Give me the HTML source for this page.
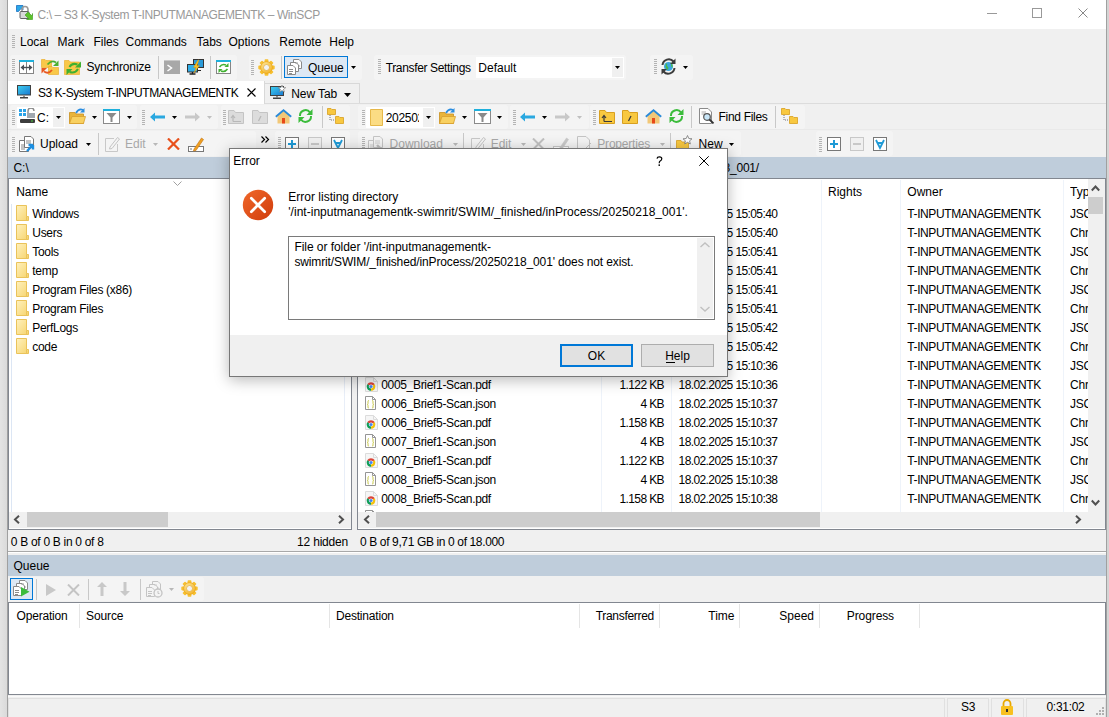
<!DOCTYPE html><html><head><meta charset="utf-8"><style>
*{margin:0;padding:0;box-sizing:border-box}
html,body{width:1109px;height:717px;overflow:hidden;background:#f0f0f0;position:relative;
font-family:"Liberation Sans",sans-serif;font-size:12px;color:#000}
div,span,svg{position:absolute;display:block}
span{white-space:pre}
</style></head><body><div style="left:0px;top:0px;width:7px;height:717px;background:linear-gradient(to right,#e4e4e4,#dadada)"></div>
<div style="left:7px;top:0px;width:1px;height:717px;background:#a0a0a0"></div>
<div style="left:1107px;top:0px;width:2px;height:717px;background:#d4d4d4"></div>
<div style="left:1106px;top:0px;width:1px;height:717px;background:#a0a0a0"></div>
<div style="left:8px;top:0px;width:1098px;height:29px;background:#fff"></div>
<svg style="left:16px;top:5px;" width="17" height="17" viewBox="0 0 17 17"><path d="M0.5 0.5H7V5L5 3.5L2.5 6.5L0.5 6.5Z" fill="#2aa7e8" stroke="#1a6fc0" stroke-width="0.8"/><path d="M6 6V4.5A3 3 0 0 1 12 4.5V6" fill="none" stroke="#9a9a9a" stroke-width="1.6"/><rect x="4" y="6.5" width="9" height="7" rx="1" fill="#d8d8d8" stroke="#555" stroke-width="0.9"/><path d="M9 10L13 14L10.5 14.5H16.5V8.5L16 11L12 7Z" fill="#5cc22a" stroke="#3a9a1a" stroke-width="0.6"/></svg>
<span style="top:7.74px;font-size:12px;line-height:15.0px;color:#999;letter-spacing:-0.42px;left:37.5px;">C:\ – S3 K-System T-INPUTMANAGEMENTK – WinSCP</span>
<div style="left:987px;top:13px;width:10px;height:1px;background:#999"></div>
<div style="left:1032px;top:8px;width:10px;height:10px;border:1px solid #999"></div>
<svg style="left:1078px;top:8px;" width="10" height="10" viewBox="0 0 10 10"><path d="M0.5 0.5L9.5 9.5M9.5 0.5L0.5 9.5" stroke="#888" stroke-width="1"/></svg>
<div style="left:10px;top:55px;width:227px;height:25px;background:#f4f4f4;border-radius:3px"></div>
<div style="left:249px;top:55px;width:113px;height:25px;background:#f4f4f4;border-radius:3px"></div>
<div style="left:374px;top:55px;width:252px;height:25px;background:#f4f4f4;border-radius:3px"></div>
<div style="left:650px;top:55px;width:43px;height:25px;background:#f4f4f4;border-radius:3px"></div>
<div style="left:10px;top:105px;width:127px;height:24px;background:#f4f4f4;border-radius:3px"></div>
<div style="left:140px;top:105px;width:78px;height:24px;background:#f4f4f4;border-radius:3px"></div>
<div style="left:221px;top:105px;width:129px;height:24px;background:#f4f4f4;border-radius:3px"></div>
<div style="left:358px;top:105px;width:150px;height:24px;background:#f4f4f4;border-radius:3px"></div>
<div style="left:510px;top:105px;width:79px;height:24px;background:#f4f4f4;border-radius:3px"></div>
<div style="left:590px;top:105px;width:215px;height:24px;background:#f4f4f4;border-radius:3px"></div>
<div style="left:10px;top:131px;width:246px;height:25px;background:#f4f4f4;border-radius:3px"></div>
<div style="left:275px;top:131px;width:75px;height:25px;background:#f4f4f4;border-radius:3px"></div>
<div style="left:358px;top:131px;width:383px;height:25px;background:#f4f4f4;border-radius:3px"></div>
<div style="left:816px;top:131px;width:77px;height:25px;background:#f4f4f4;border-radius:3px"></div>
<div style="left:8px;top:577px;width:196px;height:24px;background:#f4f4f4;border-radius:3px"></div>
<svg style="left:12px;top:35px;" width="3" height="14" viewBox="0 0 3 14"><rect x="0" y="0" width="3" height="1" fill="#b4b4b4"/><rect x="0" y="2" width="3" height="1" fill="#b4b4b4"/><rect x="0" y="4" width="3" height="1" fill="#b4b4b4"/><rect x="0" y="6" width="3" height="1" fill="#b4b4b4"/><rect x="0" y="8" width="3" height="1" fill="#b4b4b4"/><rect x="0" y="10" width="3" height="1" fill="#b4b4b4"/><rect x="0" y="12" width="3" height="1" fill="#b4b4b4"/></svg>
<span style="top:35.34px;font-size:12px;line-height:15.0px;color:#000;left:20px;">Local</span>
<span style="top:35.34px;font-size:12px;line-height:15.0px;color:#000;left:57.6px;">Mark</span>
<span style="top:35.34px;font-size:12px;line-height:15.0px;color:#000;left:93.4px;">Files</span>
<span style="top:35.34px;font-size:12px;line-height:15.0px;color:#000;left:125.5px;">Commands</span>
<span style="top:35.34px;font-size:12px;line-height:15.0px;color:#000;left:196.5px;">Tabs</span>
<span style="top:35.34px;font-size:12px;line-height:15.0px;color:#000;left:228.5px;">Options</span>
<span style="top:35.34px;font-size:12px;line-height:15.0px;color:#000;left:279.3px;">Remote</span>
<span style="top:35.34px;font-size:12px;line-height:15.0px;color:#000;left:329.3px;">Help</span>
<svg style="left:12px;top:59px;" width="3" height="16" viewBox="0 0 3 16"><rect x="0" y="0" width="3" height="1" fill="#b4b4b4"/><rect x="0" y="2" width="3" height="1" fill="#b4b4b4"/><rect x="0" y="4" width="3" height="1" fill="#b4b4b4"/><rect x="0" y="6" width="3" height="1" fill="#b4b4b4"/><rect x="0" y="8" width="3" height="1" fill="#b4b4b4"/><rect x="0" y="10" width="3" height="1" fill="#b4b4b4"/><rect x="0" y="12" width="3" height="1" fill="#b4b4b4"/><rect x="0" y="14" width="3" height="1" fill="#b4b4b4"/></svg>
<svg style="left:19px;top:60px;" width="15" height="14" viewBox="0 0 15 14"><rect x="0.5" y="1.5" width="14" height="12" fill="#fff" stroke="#858585"/><rect x="0" y="0" width="15" height="2" fill="#1eb0dc"/><path d="M7.5 2V14" stroke="#858585"/><path d="M3 7.5H12" stroke="#4a4f55" stroke-width="1.4"/><path d="M1.5 7.5L5 4.5V10.5Z M13.5 7.5L10 4.5V10.5Z" fill="#4a4f55"/></svg>
<svg style="left:41px;top:59px;" width="18" height="16" viewBox="0 0 18 16"><path d="M0.5 0.5H4L5 1.5H10.5V8.5H0.5Z" fill="#f9c848" stroke="#eaa820" stroke-width="0.6"/><path d="M7.5 7.5H11L12 8.5H17.5V15.5H7.5Z" fill="#f9c848" stroke="#eaa820" stroke-width="0.6"/><path d="M6.5 5.5Q10.5 0.5 15 3.5" stroke="#4cb030" stroke-width="1.8" fill="none"/><path d="M17.5 1.5V7H12Z" fill="#4cb030"/><path d="M11 11Q7.5 15.5 3 12.5" stroke="#e85820" stroke-width="1.8" fill="none"/><path d="M0.5 14.5V9H6Z" fill="#e85820"/></svg>
<svg style="left:64px;top:59px;" width="18" height="16" viewBox="0 0 18 16"><path d="M0.5 1.5H5L6.5 3H15.5V15.5H0.5Z" fill="#f9c848" stroke="#eaa820" stroke-width="0.6"/><path d="M5.5 8Q8 3.5 13.5 5.5" stroke="#40b030" stroke-width="2" fill="none"/><path d="M17 2.5V8.5H11Z" fill="#40b030"/><path d="M14 10Q11 15 5.5 13" stroke="#40b030" stroke-width="2" fill="none"/><path d="M2.5 16V10H8.5Z" fill="#40b030"/></svg>
<span style="top:60.34px;font-size:12px;line-height:15.0px;color:#000;letter-spacing:-0.15px;left:86.4px;">Synchronize</span>
<div style="left:158px;top:56px;width:1px;height:23px;background:#c8c8c8"></div>
<svg style="left:164px;top:60px;" width="16" height="14" viewBox="0 0 16 14"><rect x="0" y="0" width="16" height="14" fill="#a8a8a8"/><rect x="0" y="0" width="16" height="1" fill="#c8c8c8"/><path d="M3.5 5L7.5 8L3.5 11" stroke="#fff" fill="none" stroke-width="1.5"/></svg>
<svg style="left:187px;top:59px;" width="17" height="16" viewBox="0 0 17 16"><rect x="6.5" y="0.5" width="10" height="8" fill="#2a9ad8" stroke="#333" stroke-width="1"/><path d="M10 9V11M8 11.5H14" stroke="#222" stroke-width="1.2"/><rect x="0.5" y="5.5" width="10" height="7.5" fill="#30aee8" stroke="#333" stroke-width="1"/><path d="M5.5 13V14.5M2.5 15H8.5" stroke="#222" stroke-width="1.4"/><path d="M11 1L6.5 8.5H9L7 14L12.5 6.5H10L12 1Z" fill="#f8c020" stroke="#d89000" stroke-width="0.4"/></svg>
<div style="left:210px;top:56px;width:1px;height:23px;background:#c8c8c8"></div>
<svg style="left:216px;top:60px;" width="15" height="14" viewBox="0 0 15 14"><rect x="0.5" y="1.5" width="14" height="12" fill="#fff" stroke="#858585"/><rect x="0" y="0" width="15" height="2" fill="#1eb0dc"/><path d="M3.5 7Q6 3.5 10 5" stroke="#40b030" stroke-width="1.5" fill="none"/><path d="M12.5 3V7H8.5Z" fill="#40b030"/><path d="M11.5 9Q9 12.5 5 11" stroke="#40b030" stroke-width="1.5" fill="none"/><path d="M2.5 13V9H6.5Z" fill="#40b030"/></svg>
<svg style="left:251px;top:60px;" width="3" height="16" viewBox="0 0 3 16"><rect x="0" y="0" width="3" height="1" fill="#b4b4b4"/><rect x="0" y="2" width="3" height="1" fill="#b4b4b4"/><rect x="0" y="4" width="3" height="1" fill="#b4b4b4"/><rect x="0" y="6" width="3" height="1" fill="#b4b4b4"/><rect x="0" y="8" width="3" height="1" fill="#b4b4b4"/><rect x="0" y="10" width="3" height="1" fill="#b4b4b4"/><rect x="0" y="12" width="3" height="1" fill="#b4b4b4"/><rect x="0" y="14" width="3" height="1" fill="#b4b4b4"/></svg>
<svg style="left:258px;top:59px;" width="17" height="17" viewBox="0 0 17 17"><defs><radialGradient id="gg" cx="0.4" cy="0.35" r="0.7"><stop offset="0" stop-color="#fde9a0"/><stop offset="1" stop-color="#f2b020"/></radialGradient></defs><rect x="6.6" y="0.3" width="3.8" height="4" rx="0.8" fill="#f7c030" transform="rotate(0 8.5 8.5)"/><rect x="6.6" y="0.3" width="3.8" height="4" rx="0.8" fill="#f7c030" transform="rotate(45 8.5 8.5)"/><rect x="6.6" y="0.3" width="3.8" height="4" rx="0.8" fill="#f7c030" transform="rotate(90 8.5 8.5)"/><rect x="6.6" y="0.3" width="3.8" height="4" rx="0.8" fill="#f7c030" transform="rotate(135 8.5 8.5)"/><rect x="6.6" y="0.3" width="3.8" height="4" rx="0.8" fill="#f7c030" transform="rotate(180 8.5 8.5)"/><rect x="6.6" y="0.3" width="3.8" height="4" rx="0.8" fill="#f7c030" transform="rotate(225 8.5 8.5)"/><rect x="6.6" y="0.3" width="3.8" height="4" rx="0.8" fill="#f7c030" transform="rotate(270 8.5 8.5)"/><rect x="6.6" y="0.3" width="3.8" height="4" rx="0.8" fill="#f7c030" transform="rotate(315 8.5 8.5)"/><circle cx="8.5" cy="8.5" r="6" fill="url(#gg)" stroke="#eaa418" stroke-width="0.6"/><circle cx="8.5" cy="8.5" r="3" fill="#f2f2f2" stroke="#e0a020" stroke-width="0.6"/></svg>
<div style="left:281px;top:56px;width:1px;height:23px;background:#c8c8c8"></div>
<div style="left:284px;top:56px;width:64px;height:22px;background:#dde8f4;border:1px solid #0078d7"></div>
<svg style="left:287px;top:59px;" width="16" height="16" viewBox="0 0 16 16"><path d="M6.5 0.5H12L14.5 3V9.5H6.5Z" fill="#fff" stroke="#8a8a8a"/><path d="M3.5 3.5H9L11.5 6V12.5H3.5Z" fill="#fff" stroke="#8a8a8a"/><path d="M0.5 6.5H6L8.5 9V15.5H0.5Z" fill="#fff" stroke="#8a8a8a"/><path d="M2 10.5H6M2 12.5H6M2 14.5H5" stroke="#8a8a8a"/><path d="M8 4H11M11 7H13" stroke="#8a8a8a" stroke-width="0.8"/></svg>
<span style="top:60.84px;font-size:12px;line-height:15.0px;color:#000;letter-spacing:-0.1px;left:308px;">Queue</span>
<svg style="left:351px;top:66px;" width="5" height="3" viewBox="0 0 5 3"><path d="M0 0H5L2.5 3Z" fill="#000"/></svg>
<svg style="left:378px;top:59px;" width="3" height="16" viewBox="0 0 3 16"><rect x="0" y="0" width="3" height="1" fill="#b4b4b4"/><rect x="0" y="2" width="3" height="1" fill="#b4b4b4"/><rect x="0" y="4" width="3" height="1" fill="#b4b4b4"/><rect x="0" y="6" width="3" height="1" fill="#b4b4b4"/><rect x="0" y="8" width="3" height="1" fill="#b4b4b4"/><rect x="0" y="10" width="3" height="1" fill="#b4b4b4"/><rect x="0" y="12" width="3" height="1" fill="#b4b4b4"/><rect x="0" y="14" width="3" height="1" fill="#b4b4b4"/></svg>
<span style="top:61.34px;font-size:12px;line-height:15.0px;color:#000;letter-spacing:-0.35px;left:385.7px;">Transfer Settings</span>
<div style="left:476px;top:57px;width:148px;height:21px;background:#fff"></div>
<div style="left:612px;top:58px;width:11px;height:19px;background:#f0f0f0"></div>
<svg style="left:615px;top:66px;" width="5" height="3" viewBox="0 0 5 3"><path d="M0 0H5L2.5 3Z" fill="#000"/></svg>
<span style="top:61.34px;font-size:12px;line-height:15.0px;color:#000;left:478.3px;">Default</span>
<svg style="left:654px;top:59px;" width="3" height="16" viewBox="0 0 3 16"><rect x="0" y="0" width="3" height="1" fill="#b4b4b4"/><rect x="0" y="2" width="3" height="1" fill="#b4b4b4"/><rect x="0" y="4" width="3" height="1" fill="#b4b4b4"/><rect x="0" y="6" width="3" height="1" fill="#b4b4b4"/><rect x="0" y="8" width="3" height="1" fill="#b4b4b4"/><rect x="0" y="10" width="3" height="1" fill="#b4b4b4"/><rect x="0" y="12" width="3" height="1" fill="#b4b4b4"/><rect x="0" y="14" width="3" height="1" fill="#b4b4b4"/></svg>
<svg style="left:660px;top:58px;" width="17" height="17" viewBox="0 0 17 17"><circle cx="8.5" cy="8.5" r="4.5" fill="#3aa6e0"/><path d="M6 5Q8 6 7 8Q9 9 8 12Q6 11 5.5 9Z M10 4.5Q12 6 11 8L12.5 10Q13 7 12 5Z" fill="#4cb848"/><path d="M2.5 7A6.3 6.3 0 0 1 13.5 3.5M14.5 10A6.3 6.3 0 0 1 3.5 13.5" fill="none" stroke="#3c3c3c" stroke-width="2"/><path d="M15.5 0.5V6H10Z M1.5 16.5V11H7Z" fill="#3c3c3c"/></svg>
<svg style="left:683px;top:66px;" width="5" height="3" viewBox="0 0 5 3"><path d="M0 0H5L2.5 3Z" fill="#000"/></svg>
<div style="left:8px;top:81px;width:257px;height:23px;background:#fff;border-right:1px solid #d8d8d8"></div>
<svg style="left:17px;top:85px;" width="14" height="14" viewBox="0 0 14 14"><defs><linearGradient id="mg" x1="0" y1="0" x2="1" y2="1"><stop offset="0" stop-color="#3ed0f0"/><stop offset="1" stop-color="#1a78d0"/></linearGradient></defs><rect x="0.5" y="0.5" width="13" height="9.5" fill="url(#mg)" stroke="#404040"/><rect x="6" y="10.5" width="2" height="1.5" fill="#909090"/><rect x="3" y="12" width="8" height="1.5" fill="#404040"/></svg>
<span style="top:85.54px;font-size:12px;line-height:15.0px;color:#000;letter-spacing:-0.45px;left:37.9px;">S3 K-System T-INPUTMANAGEMENTK</span>
<svg style="left:247px;top:87.5px;" width="9" height="9" viewBox="0 0 9 9"><path d="M0.5 0.5L8.5 8.5M8.5 0.5L0.5 8.5" stroke="#000" stroke-width="1.1"/></svg>
<div style="left:264px;top:83px;width:96px;height:21px;border:1px solid #d8d8d8;border-bottom:none;background:#f0f0f0"></div>
<svg style="left:270px;top:85px;" width="17" height="15" viewBox="0 0 17 15"><defs><linearGradient id="mg" x1="0" y1="0" x2="1" y2="1"><stop offset="0" stop-color="#3ed0f0"/><stop offset="1" stop-color="#1a78d0"/></linearGradient></defs><rect x="0.5" y="1.5" width="13" height="9" fill="url(#mg)" stroke="#404040"/><rect x="6" y="11" width="2" height="1.5" fill="#909090"/><rect x="3" y="12.5" width="8" height="1.5" fill="#404040"/><path d="M12 0L13 2.5L15.8 2.6L13.6 4.3L14.4 7L12 5.5L9.6 7L10.4 4.3L8.2 2.6L11 2.5Z" fill="#fff" stroke="#777" stroke-width="0.6"/></svg>
<span style="top:86.74px;font-size:12px;line-height:15.0px;color:#000;letter-spacing:-0.1px;left:291.3px;">New Tab</span>
<svg style="left:344px;top:93px;" width="7" height="4" viewBox="0 0 7 4"><path d="M0 0H7L3.5 4Z" fill="#000"/></svg>
<div style="left:265px;top:103px;width:841px;height:1px;background:#dcdcdc"></div>
<div style="left:8px;top:129px;width:1098px;height:1px;background:#e9e9e9"></div>
<svg style="left:12px;top:110px;" width="3" height="16" viewBox="0 0 3 16"><rect x="0" y="0" width="3" height="1" fill="#b4b4b4"/><rect x="0" y="2" width="3" height="1" fill="#b4b4b4"/><rect x="0" y="4" width="3" height="1" fill="#b4b4b4"/><rect x="0" y="6" width="3" height="1" fill="#b4b4b4"/><rect x="0" y="8" width="3" height="1" fill="#b4b4b4"/><rect x="0" y="10" width="3" height="1" fill="#b4b4b4"/><rect x="0" y="12" width="3" height="1" fill="#b4b4b4"/><rect x="0" y="14" width="3" height="1" fill="#b4b4b4"/></svg>
<div style="left:17px;top:107px;width:48px;height:21px;background:#fff"></div>
<div style="left:53px;top:108px;width:11px;height:19px;background:#f0f0f0"></div>
<svg style="left:19px;top:108px;" width="17" height="16" viewBox="0 0 17 16"><rect x="0" y="1" width="3" height="3" fill="#2aa3e8"/><rect x="4" y="1" width="3" height="3" fill="#2aa3e8"/><rect x="0" y="5" width="3" height="3" fill="#2aa3e8"/><rect x="4" y="5" width="3" height="3" fill="#2aa3e8"/><path d="M9 5V3A3 3 0 0 1 15 3" fill="none" stroke="#8a8a8a" stroke-width="1.4"/><rect x="8" y="5" width="8" height="5" fill="#a0a8b0"/><rect x="1" y="11" width="15" height="4" rx="1" fill="#3c3c3c"/><rect x="12" y="12.5" width="2" height="1" fill="#4cd040"/></svg>
<span style="top:111.34px;font-size:12px;line-height:15.0px;color:#000;left:37px;">C:</span>
<svg style="left:56px;top:116px;" width="5" height="3" viewBox="0 0 5 3"><path d="M0 0H5L2.5 3Z" fill="#000"/></svg>
<svg style="left:69px;top:108px;" width="17" height="16" viewBox="0 0 17 16"><path d="M0.5 4.5H6L7 6H14.5V15.5H0.5Z" fill="#e9b43a" stroke="#c89020" stroke-width="0.8"/><path d="M0.5 15.5L3 8.5H16.5L14.5 15.5Z" fill="#f8d060" stroke="#d8a030" stroke-width="0.8"/><path d="M7 5Q10 0 14 2" fill="none" stroke="#2a8de0" stroke-width="1.8"/><path d="M15.5 0V4.5H11Z" fill="#2a8de0"/></svg>
<svg style="left:92px;top:116px;" width="5" height="3" viewBox="0 0 5 3"><path d="M0 0H5L2.5 3Z" fill="#000"/></svg>
<svg style="left:103px;top:109px;" width="17" height="15" viewBox="0 0 17 15"><rect x="0.5" y="1.5" width="16" height="13" fill="#fff" stroke="#8a8a8a"/><rect x="0" y="0" width="17" height="2" fill="#1eb0dc"/><path d="M3.5 4H13.5L9.5 8.5V13H7.5V8.5Z" fill="#8a8a8a"/></svg>
<svg style="left:127px;top:116px;" width="5" height="3" viewBox="0 0 5 3"><path d="M0 0H5L2.5 3Z" fill="#000"/></svg>
<svg style="left:142px;top:110px;" width="3" height="16" viewBox="0 0 3 16"><rect x="0" y="0" width="3" height="1" fill="#b4b4b4"/><rect x="0" y="2" width="3" height="1" fill="#b4b4b4"/><rect x="0" y="4" width="3" height="1" fill="#b4b4b4"/><rect x="0" y="6" width="3" height="1" fill="#b4b4b4"/><rect x="0" y="8" width="3" height="1" fill="#b4b4b4"/><rect x="0" y="10" width="3" height="1" fill="#b4b4b4"/><rect x="0" y="12" width="3" height="1" fill="#b4b4b4"/><rect x="0" y="14" width="3" height="1" fill="#b4b4b4"/></svg>
<svg style="left:150px;top:112px;" width="15" height="10" viewBox="0 0 15 10"><path d="M0 5L5 0.5V3.5H15V6.5H5V9.5Z" fill="#2aa8e0"/></svg>
<svg style="left:172px;top:116px;" width="5" height="3" viewBox="0 0 5 3"><path d="M0 0H5L2.5 3Z" fill="#000"/></svg>
<svg style="left:185px;top:112px;" width="15" height="10" viewBox="0 0 15 10"><path d="M15 5L10 0.5V3.5H0V6.5H10V9.5Z" fill="#c8c8c8"/></svg>
<svg style="left:207px;top:116px;" width="5" height="3" viewBox="0 0 5 3"><path d="M0 0H5L2.5 3Z" fill="#c0c0c0"/></svg>
<svg style="left:223px;top:110px;" width="3" height="16" viewBox="0 0 3 16"><rect x="0" y="0" width="3" height="1" fill="#b4b4b4"/><rect x="0" y="2" width="3" height="1" fill="#b4b4b4"/><rect x="0" y="4" width="3" height="1" fill="#b4b4b4"/><rect x="0" y="6" width="3" height="1" fill="#b4b4b4"/><rect x="0" y="8" width="3" height="1" fill="#b4b4b4"/><rect x="0" y="10" width="3" height="1" fill="#b4b4b4"/><rect x="0" y="12" width="3" height="1" fill="#b4b4b4"/><rect x="0" y="14" width="3" height="1" fill="#b4b4b4"/></svg>
<svg style="left:228px;top:109px;" width="16" height="15" viewBox="0 0 16 15"><path d="M0.5 1.5H6L7.5 3.5H15.5V14.5H0.5Z" fill="#dcdcdc" stroke="#c4c4c4"/><path d="M5 12.5H13M5 12.5V7M3 9L5 6.5L7 9" fill="none" stroke="#b8b8b8" stroke-width="1.2"/></svg>
<svg style="left:252px;top:109px;" width="16" height="15" viewBox="0 0 16 15"><path d="M0.5 1.5H6L7.5 3.5H15.5V14.5H0.5Z" fill="#dcdcdc" stroke="#c4c4c4"/><path d="M9 7L6.5 12" stroke="#b8b8b8" stroke-width="1.3"/></svg>
<svg style="left:275px;top:109px;" width="17" height="15" viewBox="0 0 17 15"><path d="M8.5 1.5L2.5 7V14.5H14.5V7Z" fill="#f2c878"/><path d="M0.8 7.8L8.5 1.2L16.2 7.8" stroke="#2a8ad8" stroke-width="1.8" fill="none"/><rect x="7" y="9" width="3" height="5.5" fill="#e84818"/></svg>
<svg style="left:297px;top:108px;" width="17" height="16" viewBox="0 0 17 16"><path d="M3 8A5.5 5.5 0 0 1 13 4.5M14 8A5.5 5.5 0 0 1 4 11.5" fill="none" stroke="#3cbc3c" stroke-width="2"/><path d="M15.5 1V7H9.5Z M1.5 15V9H7.5Z" fill="#3cbc3c"/></svg>
<div style="left:322px;top:106px;width:1px;height:22px;background:#c8c8c8"></div>
<svg style="left:327px;top:108px;" width="17" height="16" viewBox="0 0 17 16"><path d="M0.5 0.5H4L5 1.5H8.5V6.5H0.5Z" fill="#f8c840" stroke="#d8a020" stroke-width="0.8"/><path d="M8.5 8.5H12L13 9.5H16.5V15.5H8.5Z" fill="#f8c840" stroke="#d8a020" stroke-width="0.8"/><path d="M3 7V12H8" fill="none" stroke="#555" stroke-width="0.8" stroke-dasharray="1 1"/></svg>
<svg style="left:362px;top:110px;" width="3" height="16" viewBox="0 0 3 16"><rect x="0" y="0" width="3" height="1" fill="#b4b4b4"/><rect x="0" y="2" width="3" height="1" fill="#b4b4b4"/><rect x="0" y="4" width="3" height="1" fill="#b4b4b4"/><rect x="0" y="6" width="3" height="1" fill="#b4b4b4"/><rect x="0" y="8" width="3" height="1" fill="#b4b4b4"/><rect x="0" y="10" width="3" height="1" fill="#b4b4b4"/><rect x="0" y="12" width="3" height="1" fill="#b4b4b4"/><rect x="0" y="14" width="3" height="1" fill="#b4b4b4"/></svg>
<div style="left:366px;top:107px;width:69px;height:21px;background:#fff"></div>
<div style="left:423px;top:108px;width:11px;height:19px;background:#f0f0f0"></div>
<svg style="left:370px;top:109px;" width="13" height="17" viewBox="0 0 13 17"><path d="M0.5 0.5H12.5V16.5H0.5Z" fill="#fbdc84" stroke="#e6b84a"/></svg>
<span style="top:111.34px;font-size:12px;line-height:15.0px;color:#000;letter-spacing:-0.3px;left:385.7px;width:33px;overflow:hidden;">202502</span>
<svg style="left:426px;top:116px;" width="5" height="3" viewBox="0 0 5 3"><path d="M0 0H5L2.5 3Z" fill="#000"/></svg>
<svg style="left:439px;top:108px;" width="17" height="16" viewBox="0 0 17 16"><path d="M0.5 4.5H6L7 6H14.5V15.5H0.5Z" fill="#e9b43a" stroke="#c89020" stroke-width="0.8"/><path d="M0.5 15.5L3 8.5H16.5L14.5 15.5Z" fill="#f8d060" stroke="#d8a030" stroke-width="0.8"/><path d="M7 5Q10 0 14 2" fill="none" stroke="#2a8de0" stroke-width="1.8"/><path d="M15.5 0V4.5H11Z" fill="#2a8de0"/></svg>
<svg style="left:462px;top:116px;" width="5" height="3" viewBox="0 0 5 3"><path d="M0 0H5L2.5 3Z" fill="#000"/></svg>
<svg style="left:474px;top:109px;" width="17" height="15" viewBox="0 0 17 15"><rect x="0.5" y="1.5" width="16" height="13" fill="#fff" stroke="#8a8a8a"/><rect x="0" y="0" width="17" height="2" fill="#1eb0dc"/><path d="M3.5 4H13.5L9.5 8.5V13H7.5V8.5Z" fill="#8a8a8a"/></svg>
<svg style="left:497px;top:116px;" width="5" height="3" viewBox="0 0 5 3"><path d="M0 0H5L2.5 3Z" fill="#000"/></svg>
<svg style="left:513px;top:110px;" width="3" height="16" viewBox="0 0 3 16"><rect x="0" y="0" width="3" height="1" fill="#b4b4b4"/><rect x="0" y="2" width="3" height="1" fill="#b4b4b4"/><rect x="0" y="4" width="3" height="1" fill="#b4b4b4"/><rect x="0" y="6" width="3" height="1" fill="#b4b4b4"/><rect x="0" y="8" width="3" height="1" fill="#b4b4b4"/><rect x="0" y="10" width="3" height="1" fill="#b4b4b4"/><rect x="0" y="12" width="3" height="1" fill="#b4b4b4"/><rect x="0" y="14" width="3" height="1" fill="#b4b4b4"/></svg>
<svg style="left:520px;top:112px;" width="15" height="10" viewBox="0 0 15 10"><path d="M0 5L5 0.5V3.5H15V6.5H5V9.5Z" fill="#2aa8e0"/></svg>
<svg style="left:542px;top:116px;" width="5" height="3" viewBox="0 0 5 3"><path d="M0 0H5L2.5 3Z" fill="#000"/></svg>
<svg style="left:555px;top:112px;" width="15" height="10" viewBox="0 0 15 10"><path d="M15 5L10 0.5V3.5H0V6.5H10V9.5Z" fill="#c8c8c8"/></svg>
<svg style="left:577px;top:116px;" width="5" height="3" viewBox="0 0 5 3"><path d="M0 0H5L2.5 3Z" fill="#c0c0c0"/></svg>
<svg style="left:593px;top:110px;" width="3" height="16" viewBox="0 0 3 16"><rect x="0" y="0" width="3" height="1" fill="#b4b4b4"/><rect x="0" y="2" width="3" height="1" fill="#b4b4b4"/><rect x="0" y="4" width="3" height="1" fill="#b4b4b4"/><rect x="0" y="6" width="3" height="1" fill="#b4b4b4"/><rect x="0" y="8" width="3" height="1" fill="#b4b4b4"/><rect x="0" y="10" width="3" height="1" fill="#b4b4b4"/><rect x="0" y="12" width="3" height="1" fill="#b4b4b4"/><rect x="0" y="14" width="3" height="1" fill="#b4b4b4"/></svg>
<svg style="left:599px;top:109px;" width="16" height="15" viewBox="0 0 16 15"><path d="M0.5 1.5H6L7.5 3.5H15.5V14.5H0.5Z" fill="#f8c840" stroke="#d8a020"/><path d="M5 12.5H13M5 12.5V7M3 9L5 6.5L7 9" fill="none" stroke="#3a3a3a" stroke-width="1.2"/></svg>
<svg style="left:622px;top:109px;" width="16" height="15" viewBox="0 0 16 15"><path d="M0.5 1.5H6L7.5 3.5H15.5V14.5H0.5Z" fill="#f8c840" stroke="#d8a020"/><path d="M9 7L6.5 12" stroke="#3a3a3a" stroke-width="1.3"/></svg>
<svg style="left:645px;top:109px;" width="17" height="15" viewBox="0 0 17 15"><path d="M8.5 1.5L2.5 7V14.5H14.5V7Z" fill="#f2c878"/><path d="M0.8 7.8L8.5 1.2L16.2 7.8" stroke="#2a8ad8" stroke-width="1.8" fill="none"/><rect x="7" y="9" width="3" height="5.5" fill="#e84818"/></svg>
<svg style="left:668px;top:108px;" width="17" height="16" viewBox="0 0 17 16"><path d="M3 8A5.5 5.5 0 0 1 13 4.5M14 8A5.5 5.5 0 0 1 4 11.5" fill="none" stroke="#3cbc3c" stroke-width="2"/><path d="M15.5 1V7H9.5Z M1.5 15V9H7.5Z" fill="#3cbc3c"/></svg>
<div style="left:691px;top:106px;width:1px;height:22px;background:#c8c8c8"></div>
<svg style="left:699px;top:108px;" width="16" height="16" viewBox="0 0 16 16"><path d="M0.5 0.5H9L12.5 4V15.5H0.5Z" fill="#fff" stroke="#8a8a8a"/><path d="M2.5 4H7M2.5 6H6" stroke="#aaa"/><circle cx="8" cy="9" r="3.3" fill="#c8e6f8" stroke="#555" stroke-width="1.2"/><path d="M10.5 11.5L14.5 15.5" stroke="#333" stroke-width="1.8"/></svg>
<span style="top:110.34px;font-size:12px;line-height:15.0px;color:#000;letter-spacing:-0.3px;left:718.5px;">Find Files</span>
<div style="left:775px;top:106px;width:1px;height:22px;background:#c8c8c8"></div>
<svg style="left:781px;top:108px;" width="17" height="16" viewBox="0 0 17 16"><path d="M0.5 0.5H4L5 1.5H8.5V6.5H0.5Z" fill="#f8c840" stroke="#d8a020" stroke-width="0.8"/><path d="M8.5 8.5H12L13 9.5H16.5V15.5H8.5Z" fill="#f8c840" stroke="#d8a020" stroke-width="0.8"/><path d="M3 7V12H8" fill="none" stroke="#555" stroke-width="0.8" stroke-dasharray="1 1"/></svg>
<svg style="left:12px;top:137px;" width="3" height="16" viewBox="0 0 3 16"><rect x="0" y="0" width="3" height="1" fill="#b4b4b4"/><rect x="0" y="2" width="3" height="1" fill="#b4b4b4"/><rect x="0" y="4" width="3" height="1" fill="#b4b4b4"/><rect x="0" y="6" width="3" height="1" fill="#b4b4b4"/><rect x="0" y="8" width="3" height="1" fill="#b4b4b4"/><rect x="0" y="10" width="3" height="1" fill="#b4b4b4"/><rect x="0" y="12" width="3" height="1" fill="#b4b4b4"/><rect x="0" y="14" width="3" height="1" fill="#b4b4b4"/></svg>
<svg style="left:19px;top:136px;" width="17" height="16" viewBox="0 0 17 16"><path d="M0.5 4.5H7L9.5 7V15.5H0.5Z" fill="#fff" stroke="#777"/><path d="M2 9H7M2 11H7M2 13H6" stroke="#888"/><path d="M5.5 0.5H12L14.5 3V11.5H5.5Z" fill="#fff" stroke="#777"/><path d="M7 5H12M7 7H12" stroke="#888"/><path d="M8 15L14 9M14 9V13.5M14 9H9.5" stroke="#1c8ee0" stroke-width="2.4" fill="none"/></svg>
<span style="top:136.84px;font-size:12px;line-height:15.0px;color:#000;left:40px;">Upload</span>
<svg style="left:86px;top:143px;" width="5" height="3" viewBox="0 0 5 3"><path d="M0 0H5L2.5 3Z" fill="#000"/></svg>
<div style="left:98px;top:133px;width:1px;height:22px;background:#c8c8c8"></div>
<svg style="left:105px;top:136px;" width="16" height="16" viewBox="0 0 16 16"><path d="M0.5 2.5H9M0.5 2.5V15.5H12.5V8" fill="none" stroke="#c8c8c8"/><path d="M5 11L12.5 1.5L14.5 3L7 12.5L4.5 13Z" fill="none" stroke="#c4c4c4"/></svg>
<span style="top:136.84px;font-size:12px;line-height:15.0px;color:#a8a8a8;left:125px;">Edit</span>
<svg style="left:153px;top:143px;" width="5" height="3" viewBox="0 0 5 3"><path d="M0 0H5L2.5 3Z" fill="#b8b8b8"/></svg>
<svg style="left:167px;top:138px;" width="13" height="12" viewBox="0 0 13 12"><path d="M1 0.5L12 11.5M12 0.5L1 11.5" stroke="#e8501c" stroke-width="2.2"/></svg>
<svg style="left:188px;top:136px;" width="17" height="16" viewBox="0 0 17 16"><rect x="0.5" y="10.5" width="15" height="5" fill="#fff" stroke="#777"/><path d="M3 12V14" stroke="#777"/><path d="M6 13L13.5 2L15.5 3.5L8 14.5L5.5 15Z" fill="#f0a020" stroke="#c07010" stroke-width="0.6"/></svg>
<svg style="left:261px;top:136px;" width="9" height="7" viewBox="0 0 9 7"><path d="M0.5 0.5L3.5 3.5L0.5 6.5M4.5 0.5L7.5 3.5L4.5 6.5" stroke="#000" stroke-width="1.2" fill="none"/></svg>
<svg style="left:278px;top:137px;" width="3" height="16" viewBox="0 0 3 16"><rect x="0" y="0" width="3" height="1" fill="#b4b4b4"/><rect x="0" y="2" width="3" height="1" fill="#b4b4b4"/><rect x="0" y="4" width="3" height="1" fill="#b4b4b4"/><rect x="0" y="6" width="3" height="1" fill="#b4b4b4"/><rect x="0" y="8" width="3" height="1" fill="#b4b4b4"/><rect x="0" y="10" width="3" height="1" fill="#b4b4b4"/><rect x="0" y="12" width="3" height="1" fill="#b4b4b4"/><rect x="0" y="14" width="3" height="1" fill="#b4b4b4"/></svg>
<svg style="left:285px;top:137px;" width="14" height="14" viewBox="0 0 14 14"><rect x="0.5" y="0.5" width="13" height="13" fill="#fff" stroke="#777"/><path d="M7 3V11M3 7H11" stroke="#1e9ad6" stroke-width="2"/></svg>
<svg style="left:308px;top:137px;" width="14" height="14" viewBox="0 0 14 14"><rect x="0.5" y="0.5" width="13" height="13" fill="#f0f0f0" stroke="#c8c8c8"/><path d="M3 7H11" stroke="#c8c8c8" stroke-width="2"/></svg>
<svg style="left:331px;top:137px;" width="14" height="14" viewBox="0 0 14 14"><rect x="0.5" y="0.5" width="13" height="13" fill="#fff" stroke="#777"/><path d="M3 3L7 11L11 3M4.5 6H9.5" stroke="#1e9ad6" stroke-width="1.8" fill="none"/></svg>
<svg style="left:362px;top:137px;" width="3" height="16" viewBox="0 0 3 16"><rect x="0" y="0" width="3" height="1" fill="#b4b4b4"/><rect x="0" y="2" width="3" height="1" fill="#b4b4b4"/><rect x="0" y="4" width="3" height="1" fill="#b4b4b4"/><rect x="0" y="6" width="3" height="1" fill="#b4b4b4"/><rect x="0" y="8" width="3" height="1" fill="#b4b4b4"/><rect x="0" y="10" width="3" height="1" fill="#b4b4b4"/><rect x="0" y="12" width="3" height="1" fill="#b4b4b4"/><rect x="0" y="14" width="3" height="1" fill="#b4b4b4"/></svg>
<svg style="left:368px;top:136px;" width="17" height="16" viewBox="0 0 17 16"><path d="M0.5 4.5H7L9.5 7V15.5H0.5Z" fill="#f4f4f4" stroke="#c4c4c4"/><path d="M2 9H7M2 11H7M2 13H6" stroke="#ccc"/><path d="M5.5 0.5H12L14.5 3V11.5H5.5Z" fill="#f4f4f4" stroke="#c4c4c4"/><path d="M7 5H12M7 7H12" stroke="#ccc"/><path d="M9 9L15 15" stroke="#bcbcbc" stroke-width="2.4" fill="none"/></svg>
<span style="top:136.84px;font-size:12px;line-height:15.0px;color:#a8a8a8;left:389.6px;">Download</span>
<svg style="left:453px;top:143px;" width="5" height="3" viewBox="0 0 5 3"><path d="M0 0H5L2.5 3Z" fill="#b8b8b8"/></svg>
<div style="left:463px;top:133px;width:1px;height:22px;background:#c8c8c8"></div>
<svg style="left:471px;top:136px;" width="16" height="16" viewBox="0 0 16 16"><path d="M0.5 2.5H9M0.5 2.5V15.5H12.5V8" fill="none" stroke="#c8c8c8"/><path d="M5 11L12.5 1.5L14.5 3L7 12.5L4.5 13Z" fill="none" stroke="#c4c4c4"/></svg>
<span style="top:136.84px;font-size:12px;line-height:15.0px;color:#a8a8a8;left:490.7px;">Edit</span>
<svg style="left:521px;top:143px;" width="5" height="3" viewBox="0 0 5 3"><path d="M0 0H5L2.5 3Z" fill="#b8b8b8"/></svg>
<svg style="left:532px;top:138px;" width="13" height="12" viewBox="0 0 13 12"><path d="M1 0.5L12 11.5M12 0.5L1 11.5" stroke="#c0c0c0" stroke-width="2"/></svg>
<svg style="left:553px;top:136px;" width="17" height="16" viewBox="0 0 17 16"><rect x="0.5" y="10.5" width="15" height="5" fill="#fff" stroke="#c8c8c8"/><path d="M3 12V14" stroke="#c8c8c8"/><path d="M6 13L13.5 2L15.5 3.5L8 14.5L5.5 15Z" fill="#c8c8c8" stroke="#c8c8c8" stroke-width="0.6"/></svg>
<svg style="left:577px;top:136px;" width="16" height="16" viewBox="0 0 16 16"><path d="M0.5 0.5H9L12.5 4V15.5H0.5Z" fill="#f4f4f4" stroke="#c4c4c4"/><path d="M6 15L14 7" stroke="#c4c4c4"/></svg>
<span style="top:136.84px;font-size:12px;line-height:15.0px;color:#a8a8a8;letter-spacing:-0.2px;left:597.3px;">Properties</span>
<svg style="left:660px;top:143px;" width="5" height="3" viewBox="0 0 5 3"><path d="M0 0H5L2.5 3Z" fill="#b8b8b8"/></svg>
<div style="left:670px;top:133px;width:1px;height:22px;background:#c8c8c8"></div>
<svg style="left:676px;top:135px;" width="17" height="17" viewBox="0 0 17 17"><path d="M0.5 5.5H5L6 7H12.5V16.5H0.5Z" fill="#f8c840" stroke="#d8a020" stroke-width="0.8"/><path d="M11.5 0.5L12.8 3.5L16 3.8L13.6 5.8L14.3 9L11.5 7.3L8.7 9L9.4 5.8L7 3.8L10.2 3.5Z" fill="#fff" stroke="#777" stroke-width="0.8"/></svg>
<span style="top:136.84px;font-size:12px;line-height:15.0px;color:#000;left:698.6px;">New</span>
<svg style="left:729px;top:143px;" width="5" height="3" viewBox="0 0 5 3"><path d="M0 0H5L2.5 3Z" fill="#000"/></svg>
<svg style="left:819px;top:137px;" width="3" height="16" viewBox="0 0 3 16"><rect x="0" y="0" width="3" height="1" fill="#b4b4b4"/><rect x="0" y="2" width="3" height="1" fill="#b4b4b4"/><rect x="0" y="4" width="3" height="1" fill="#b4b4b4"/><rect x="0" y="6" width="3" height="1" fill="#b4b4b4"/><rect x="0" y="8" width="3" height="1" fill="#b4b4b4"/><rect x="0" y="10" width="3" height="1" fill="#b4b4b4"/><rect x="0" y="12" width="3" height="1" fill="#b4b4b4"/><rect x="0" y="14" width="3" height="1" fill="#b4b4b4"/></svg>
<svg style="left:827px;top:137px;" width="14" height="14" viewBox="0 0 14 14"><rect x="0.5" y="0.5" width="13" height="13" fill="#fff" stroke="#777"/><path d="M7 3V11M3 7H11" stroke="#1e9ad6" stroke-width="2"/></svg>
<svg style="left:850px;top:137px;" width="14" height="14" viewBox="0 0 14 14"><rect x="0.5" y="0.5" width="13" height="13" fill="#f0f0f0" stroke="#c8c8c8"/><path d="M3 7H11" stroke="#c8c8c8" stroke-width="2"/></svg>
<svg style="left:873px;top:137px;" width="14" height="14" viewBox="0 0 14 14"><rect x="0.5" y="0.5" width="13" height="13" fill="#fff" stroke="#777"/><path d="M3 3L7 11L11 3M4.5 6H9.5" stroke="#1e9ad6" stroke-width="1.8" fill="none"/></svg>
<div style="left:8px;top:157px;width:344px;height:21px;background:#bfcddb"></div>
<span style="top:161.34px;font-size:12px;line-height:15.0px;color:#000;left:13.4px;">C:\</span>
<div style="left:357px;top:157px;width:749px;height:21px;background:#bfcddb"></div>
<span style="top:161.34px;font-size:12px;line-height:15.0px;color:#000;letter-spacing:-0.25px;right:350.20000000000005px;">/int-inputmanagementk-swimrit/SWIM/_finished/inProcess/20250218_001/</span>
<div style="left:8px;top:178px;width:344px;height:352px;background:#fff;border:1px solid #828790"></div>
<span style="top:185.34px;font-size:12px;line-height:15.0px;color:#000;left:16.2px;">Name</span>
<svg style="left:173px;top:181px;" width="9" height="5" viewBox="0 0 9 5"><path d="M0.5 0.5L4.5 4.5L8.5 0.5" stroke="#a0a0a0" fill="none"/></svg>
<div style="left:344px;top:179px;width:1px;height:333px;background:#e8eef8"></div>
<div style="left:11px;top:204px;width:1px;height:308px;background:#dce6f4"></div>
<svg style="left:16px;top:205px;" width="13" height="16" viewBox="0 0 13 16"><defs><linearGradient id="fg" x1="0" y1="0" x2="1" y2="1"><stop offset="0" stop-color="#fff1bd"/><stop offset="1" stop-color="#f6d46e"/></linearGradient></defs><path d="M0.5 0.5H10.5V11.5H12.5V15.5H0.5Z" fill="url(#fg)" stroke="#eac35a"/><path d="M10.5 11.5V15.5" stroke="#eac35a"/></svg>
<span style="top:207.34px;font-size:12px;line-height:15.0px;color:#000;letter-spacing:-0.3px;left:32.3px;">Windows</span>
<svg style="left:16px;top:224px;" width="13" height="16" viewBox="0 0 13 16"><defs><linearGradient id="fg" x1="0" y1="0" x2="1" y2="1"><stop offset="0" stop-color="#fff1bd"/><stop offset="1" stop-color="#f6d46e"/></linearGradient></defs><path d="M0.5 0.5H10.5V11.5H12.5V15.5H0.5Z" fill="url(#fg)" stroke="#eac35a"/><path d="M10.5 11.5V15.5" stroke="#eac35a"/></svg>
<span style="top:226.34px;font-size:12px;line-height:15.0px;color:#000;letter-spacing:-0.3px;left:32.3px;">Users</span>
<svg style="left:16px;top:243px;" width="13" height="16" viewBox="0 0 13 16"><defs><linearGradient id="fg" x1="0" y1="0" x2="1" y2="1"><stop offset="0" stop-color="#fff1bd"/><stop offset="1" stop-color="#f6d46e"/></linearGradient></defs><path d="M0.5 0.5H10.5V11.5H12.5V15.5H0.5Z" fill="url(#fg)" stroke="#eac35a"/><path d="M10.5 11.5V15.5" stroke="#eac35a"/></svg>
<span style="top:245.34px;font-size:12px;line-height:15.0px;color:#000;letter-spacing:-0.3px;left:32.3px;">Tools</span>
<svg style="left:16px;top:262px;" width="13" height="16" viewBox="0 0 13 16"><defs><linearGradient id="fg" x1="0" y1="0" x2="1" y2="1"><stop offset="0" stop-color="#fff1bd"/><stop offset="1" stop-color="#f6d46e"/></linearGradient></defs><path d="M0.5 0.5H10.5V11.5H12.5V15.5H0.5Z" fill="url(#fg)" stroke="#eac35a"/><path d="M10.5 11.5V15.5" stroke="#eac35a"/></svg>
<span style="top:264.34px;font-size:12px;line-height:15.0px;color:#000;letter-spacing:-0.3px;left:32.3px;">temp</span>
<svg style="left:16px;top:281px;" width="13" height="16" viewBox="0 0 13 16"><defs><linearGradient id="fg" x1="0" y1="0" x2="1" y2="1"><stop offset="0" stop-color="#fff1bd"/><stop offset="1" stop-color="#f6d46e"/></linearGradient></defs><path d="M0.5 0.5H10.5V11.5H12.5V15.5H0.5Z" fill="url(#fg)" stroke="#eac35a"/><path d="M10.5 11.5V15.5" stroke="#eac35a"/></svg>
<span style="top:283.34px;font-size:12px;line-height:15.0px;color:#000;letter-spacing:-0.3px;left:32.3px;">Program Files (x86)</span>
<svg style="left:16px;top:300px;" width="13" height="16" viewBox="0 0 13 16"><defs><linearGradient id="fg" x1="0" y1="0" x2="1" y2="1"><stop offset="0" stop-color="#fff1bd"/><stop offset="1" stop-color="#f6d46e"/></linearGradient></defs><path d="M0.5 0.5H10.5V11.5H12.5V15.5H0.5Z" fill="url(#fg)" stroke="#eac35a"/><path d="M10.5 11.5V15.5" stroke="#eac35a"/></svg>
<span style="top:302.34px;font-size:12px;line-height:15.0px;color:#000;letter-spacing:-0.3px;left:32.3px;">Program Files</span>
<svg style="left:16px;top:319px;" width="13" height="16" viewBox="0 0 13 16"><defs><linearGradient id="fg" x1="0" y1="0" x2="1" y2="1"><stop offset="0" stop-color="#fff1bd"/><stop offset="1" stop-color="#f6d46e"/></linearGradient></defs><path d="M0.5 0.5H10.5V11.5H12.5V15.5H0.5Z" fill="url(#fg)" stroke="#eac35a"/><path d="M10.5 11.5V15.5" stroke="#eac35a"/></svg>
<span style="top:321.34px;font-size:12px;line-height:15.0px;color:#000;letter-spacing:-0.3px;left:32.3px;">PerfLogs</span>
<svg style="left:16px;top:338px;" width="13" height="16" viewBox="0 0 13 16"><defs><linearGradient id="fg" x1="0" y1="0" x2="1" y2="1"><stop offset="0" stop-color="#fff1bd"/><stop offset="1" stop-color="#f6d46e"/></linearGradient></defs><path d="M0.5 0.5H10.5V11.5H12.5V15.5H0.5Z" fill="url(#fg)" stroke="#eac35a"/><path d="M10.5 11.5V15.5" stroke="#eac35a"/></svg>
<span style="top:340.34px;font-size:12px;line-height:15.0px;color:#000;letter-spacing:-0.3px;left:32.3px;">code</span>
<div style="left:9px;top:512px;width:342px;height:16px;background:#f0f0f0"></div>
<div style="left:27px;top:512px;width:141px;height:15px;background:#cdcdcd"></div>
<svg style="left:13px;top:515px;" width="8" height="9" viewBox="0 0 8 9"><path d="M6 0.8L2 4.5L6 8.2" stroke="#505050" stroke-width="2" fill="none"/></svg>
<svg style="left:337px;top:515px;" width="8" height="9" viewBox="0 0 8 9"><path d="M2 0.8L6 4.5L2 8.2" stroke="#505050" stroke-width="2" fill="none"/></svg>
<div style="left:357px;top:178px;width:749px;height:352px;background:#fff;border:1px solid #828790"></div>
<div style="left:601px;top:180px;width:1px;height:332px;background:#eef3fa"></div>
<div style="left:671px;top:180px;width:1px;height:332px;background:#eef3fa"></div>
<div style="left:821px;top:180px;width:1px;height:332px;background:#eef3fa"></div>
<div style="left:900px;top:180px;width:1px;height:332px;background:#eef3fa"></div>
<div style="left:1063px;top:180px;width:1px;height:332px;background:#eef3fa"></div>
<span style="top:185.34px;font-size:12px;line-height:15.0px;color:#000;left:828px;">Rights</span>
<span style="top:185.34px;font-size:12px;line-height:15.0px;color:#000;left:907.3px;">Owner</span>
<span style="top:185.34px;font-size:12px;line-height:15.0px;color:#000;left:1070px;width:18px;overflow:hidden;">Typ</span>
<svg style="left:365px;top:206px;" width="11" height="14" viewBox="0 0 11 14"><path d="M0.5 0.5H7.5L10.5 3.5V13.5H0.5Z" fill="#fff" stroke="#959595"/><path d="M7.5 0.5V3.5H10.5" fill="none" stroke="#959595"/><path d="M4 4.5Q3 4.5 3 5.5V7.5Q3 8.5 2.3 8.5Q3 8.5 3 9.5V11.5Q3 12 4 12" fill="none" stroke="#c4c43a" stroke-width="0.9"/><path d="M7 4.5Q8 4.5 8 5.5V7.5Q8 8.5 8.7 8.5Q8 8.5 8 9.5V11.5Q8 12 7 12" fill="none" stroke="#c4c43a" stroke-width="0.9"/></svg>
<span style="top:207.34px;font-size:12px;line-height:15.0px;color:#000;letter-spacing:-0.32px;left:381.2px;">0001_Brief1-Scan.json</span>
<span style="top:207.34px;font-size:12px;line-height:15.0px;color:#000;letter-spacing:-0.6px;right:445px;">4 KB</span>
<span style="top:207.34px;font-size:12px;line-height:15.0px;color:#000;letter-spacing:-0.6px;left:678.6px;">18.02.2025 15:05:40</span>
<span style="top:207.34px;font-size:12px;line-height:15.0px;color:#000;letter-spacing:-0.4px;left:907.3px;">T-INPUTMANAGEMENTK</span>
<span style="top:207.34px;font-size:12px;line-height:15.0px;color:#000;letter-spacing:-0.2px;left:1070px;width:18px;overflow:hidden;">JSC</span>
<svg style="left:364px;top:225px;" width="14" height="16" viewBox="0 0 14 16"><path d="M1.5 0.5H9.5L13.5 4.5V14.5H1.5Z" fill="#f6f6f6" stroke="#dcdcdc"/><path d="M9.5 0.5V4.5H13.5" fill="none" stroke="#dcdcdc"/><path d="M7 9.5L10.72 7.35A4.3 4.3 0 0 0 3.28 7.35Z" fill="#db4437"/><path d="M7 9.5L7 13.8A4.3 4.3 0 0 0 10.72 7.35Z" fill="#f4c20d"/><path d="M7 9.5L3.28 7.35A4.3 4.3 0 0 0 7 13.8Z" fill="#0f9d58"/><circle cx="7" cy="9.5" r="2.1" fill="#fff"/><circle cx="7" cy="9.5" r="1.6" fill="#4285f4"/></svg>
<span style="top:226.34px;font-size:12px;line-height:15.0px;color:#000;letter-spacing:-0.32px;left:381.2px;">0001_Brief1-Scan.pdf</span>
<span style="top:226.34px;font-size:12px;line-height:15.0px;color:#000;letter-spacing:-0.6px;right:445px;">1.122 KB</span>
<span style="top:226.34px;font-size:12px;line-height:15.0px;color:#000;letter-spacing:-0.6px;left:678.6px;">18.02.2025 15:05:40</span>
<span style="top:226.34px;font-size:12px;line-height:15.0px;color:#000;letter-spacing:-0.4px;left:907.3px;">T-INPUTMANAGEMENTK</span>
<span style="top:226.34px;font-size:12px;line-height:15.0px;color:#000;letter-spacing:-0.2px;left:1070px;width:18px;overflow:hidden;">Chr</span>
<svg style="left:365px;top:244px;" width="11" height="14" viewBox="0 0 11 14"><path d="M0.5 0.5H7.5L10.5 3.5V13.5H0.5Z" fill="#fff" stroke="#959595"/><path d="M7.5 0.5V3.5H10.5" fill="none" stroke="#959595"/><path d="M4 4.5Q3 4.5 3 5.5V7.5Q3 8.5 2.3 8.5Q3 8.5 3 9.5V11.5Q3 12 4 12" fill="none" stroke="#c4c43a" stroke-width="0.9"/><path d="M7 4.5Q8 4.5 8 5.5V7.5Q8 8.5 8.7 8.5Q8 8.5 8 9.5V11.5Q8 12 7 12" fill="none" stroke="#c4c43a" stroke-width="0.9"/></svg>
<span style="top:245.34px;font-size:12px;line-height:15.0px;color:#000;letter-spacing:-0.32px;left:381.2px;">0002_Brief5-Scan.json</span>
<span style="top:245.34px;font-size:12px;line-height:15.0px;color:#000;letter-spacing:-0.6px;right:445px;">4 KB</span>
<span style="top:245.34px;font-size:12px;line-height:15.0px;color:#000;letter-spacing:-0.6px;left:678.6px;">18.02.2025 15:05:41</span>
<span style="top:245.34px;font-size:12px;line-height:15.0px;color:#000;letter-spacing:-0.4px;left:907.3px;">T-INPUTMANAGEMENTK</span>
<span style="top:245.34px;font-size:12px;line-height:15.0px;color:#000;letter-spacing:-0.2px;left:1070px;width:18px;overflow:hidden;">JSC</span>
<svg style="left:364px;top:263px;" width="14" height="16" viewBox="0 0 14 16"><path d="M1.5 0.5H9.5L13.5 4.5V14.5H1.5Z" fill="#f6f6f6" stroke="#dcdcdc"/><path d="M9.5 0.5V4.5H13.5" fill="none" stroke="#dcdcdc"/><path d="M7 9.5L10.72 7.35A4.3 4.3 0 0 0 3.28 7.35Z" fill="#db4437"/><path d="M7 9.5L7 13.8A4.3 4.3 0 0 0 10.72 7.35Z" fill="#f4c20d"/><path d="M7 9.5L3.28 7.35A4.3 4.3 0 0 0 7 13.8Z" fill="#0f9d58"/><circle cx="7" cy="9.5" r="2.1" fill="#fff"/><circle cx="7" cy="9.5" r="1.6" fill="#4285f4"/></svg>
<span style="top:264.34px;font-size:12px;line-height:15.0px;color:#000;letter-spacing:-0.32px;left:381.2px;">0002_Brief5-Scan.pdf</span>
<span style="top:264.34px;font-size:12px;line-height:15.0px;color:#000;letter-spacing:-0.6px;right:445px;">1.158 KB</span>
<span style="top:264.34px;font-size:12px;line-height:15.0px;color:#000;letter-spacing:-0.6px;left:678.6px;">18.02.2025 15:05:41</span>
<span style="top:264.34px;font-size:12px;line-height:15.0px;color:#000;letter-spacing:-0.4px;left:907.3px;">T-INPUTMANAGEMENTK</span>
<span style="top:264.34px;font-size:12px;line-height:15.0px;color:#000;letter-spacing:-0.2px;left:1070px;width:18px;overflow:hidden;">Chr</span>
<svg style="left:365px;top:282px;" width="11" height="14" viewBox="0 0 11 14"><path d="M0.5 0.5H7.5L10.5 3.5V13.5H0.5Z" fill="#fff" stroke="#959595"/><path d="M7.5 0.5V3.5H10.5" fill="none" stroke="#959595"/><path d="M4 4.5Q3 4.5 3 5.5V7.5Q3 8.5 2.3 8.5Q3 8.5 3 9.5V11.5Q3 12 4 12" fill="none" stroke="#c4c43a" stroke-width="0.9"/><path d="M7 4.5Q8 4.5 8 5.5V7.5Q8 8.5 8.7 8.5Q8 8.5 8 9.5V11.5Q8 12 7 12" fill="none" stroke="#c4c43a" stroke-width="0.9"/></svg>
<span style="top:283.34px;font-size:12px;line-height:15.0px;color:#000;letter-spacing:-0.32px;left:381.2px;">0003_Brief1-Scan.json</span>
<span style="top:283.34px;font-size:12px;line-height:15.0px;color:#000;letter-spacing:-0.6px;right:445px;">4 KB</span>
<span style="top:283.34px;font-size:12px;line-height:15.0px;color:#000;letter-spacing:-0.6px;left:678.6px;">18.02.2025 15:05:41</span>
<span style="top:283.34px;font-size:12px;line-height:15.0px;color:#000;letter-spacing:-0.4px;left:907.3px;">T-INPUTMANAGEMENTK</span>
<span style="top:283.34px;font-size:12px;line-height:15.0px;color:#000;letter-spacing:-0.2px;left:1070px;width:18px;overflow:hidden;">JSC</span>
<svg style="left:364px;top:301px;" width="14" height="16" viewBox="0 0 14 16"><path d="M1.5 0.5H9.5L13.5 4.5V14.5H1.5Z" fill="#f6f6f6" stroke="#dcdcdc"/><path d="M9.5 0.5V4.5H13.5" fill="none" stroke="#dcdcdc"/><path d="M7 9.5L10.72 7.35A4.3 4.3 0 0 0 3.28 7.35Z" fill="#db4437"/><path d="M7 9.5L7 13.8A4.3 4.3 0 0 0 10.72 7.35Z" fill="#f4c20d"/><path d="M7 9.5L3.28 7.35A4.3 4.3 0 0 0 7 13.8Z" fill="#0f9d58"/><circle cx="7" cy="9.5" r="2.1" fill="#fff"/><circle cx="7" cy="9.5" r="1.6" fill="#4285f4"/></svg>
<span style="top:302.34px;font-size:12px;line-height:15.0px;color:#000;letter-spacing:-0.32px;left:381.2px;">0003_Brief1-Scan.pdf</span>
<span style="top:302.34px;font-size:12px;line-height:15.0px;color:#000;letter-spacing:-0.6px;right:445px;">1.122 KB</span>
<span style="top:302.34px;font-size:12px;line-height:15.0px;color:#000;letter-spacing:-0.6px;left:678.6px;">18.02.2025 15:05:41</span>
<span style="top:302.34px;font-size:12px;line-height:15.0px;color:#000;letter-spacing:-0.4px;left:907.3px;">T-INPUTMANAGEMENTK</span>
<span style="top:302.34px;font-size:12px;line-height:15.0px;color:#000;letter-spacing:-0.2px;left:1070px;width:18px;overflow:hidden;">Chr</span>
<svg style="left:365px;top:320px;" width="11" height="14" viewBox="0 0 11 14"><path d="M0.5 0.5H7.5L10.5 3.5V13.5H0.5Z" fill="#fff" stroke="#959595"/><path d="M7.5 0.5V3.5H10.5" fill="none" stroke="#959595"/><path d="M4 4.5Q3 4.5 3 5.5V7.5Q3 8.5 2.3 8.5Q3 8.5 3 9.5V11.5Q3 12 4 12" fill="none" stroke="#c4c43a" stroke-width="0.9"/><path d="M7 4.5Q8 4.5 8 5.5V7.5Q8 8.5 8.7 8.5Q8 8.5 8 9.5V11.5Q8 12 7 12" fill="none" stroke="#c4c43a" stroke-width="0.9"/></svg>
<span style="top:321.34px;font-size:12px;line-height:15.0px;color:#000;letter-spacing:-0.32px;left:381.2px;">0004_Brief5-Scan.json</span>
<span style="top:321.34px;font-size:12px;line-height:15.0px;color:#000;letter-spacing:-0.6px;right:445px;">4 KB</span>
<span style="top:321.34px;font-size:12px;line-height:15.0px;color:#000;letter-spacing:-0.6px;left:678.6px;">18.02.2025 15:05:42</span>
<span style="top:321.34px;font-size:12px;line-height:15.0px;color:#000;letter-spacing:-0.4px;left:907.3px;">T-INPUTMANAGEMENTK</span>
<span style="top:321.34px;font-size:12px;line-height:15.0px;color:#000;letter-spacing:-0.2px;left:1070px;width:18px;overflow:hidden;">JSC</span>
<svg style="left:364px;top:339px;" width="14" height="16" viewBox="0 0 14 16"><path d="M1.5 0.5H9.5L13.5 4.5V14.5H1.5Z" fill="#f6f6f6" stroke="#dcdcdc"/><path d="M9.5 0.5V4.5H13.5" fill="none" stroke="#dcdcdc"/><path d="M7 9.5L10.72 7.35A4.3 4.3 0 0 0 3.28 7.35Z" fill="#db4437"/><path d="M7 9.5L7 13.8A4.3 4.3 0 0 0 10.72 7.35Z" fill="#f4c20d"/><path d="M7 9.5L3.28 7.35A4.3 4.3 0 0 0 7 13.8Z" fill="#0f9d58"/><circle cx="7" cy="9.5" r="2.1" fill="#fff"/><circle cx="7" cy="9.5" r="1.6" fill="#4285f4"/></svg>
<span style="top:340.34px;font-size:12px;line-height:15.0px;color:#000;letter-spacing:-0.32px;left:381.2px;">0004_Brief5-Scan.pdf</span>
<span style="top:340.34px;font-size:12px;line-height:15.0px;color:#000;letter-spacing:-0.6px;right:445px;">1.158 KB</span>
<span style="top:340.34px;font-size:12px;line-height:15.0px;color:#000;letter-spacing:-0.6px;left:678.6px;">18.02.2025 15:05:42</span>
<span style="top:340.34px;font-size:12px;line-height:15.0px;color:#000;letter-spacing:-0.4px;left:907.3px;">T-INPUTMANAGEMENTK</span>
<span style="top:340.34px;font-size:12px;line-height:15.0px;color:#000;letter-spacing:-0.2px;left:1070px;width:18px;overflow:hidden;">Chr</span>
<svg style="left:365px;top:358px;" width="11" height="14" viewBox="0 0 11 14"><path d="M0.5 0.5H7.5L10.5 3.5V13.5H0.5Z" fill="#fff" stroke="#959595"/><path d="M7.5 0.5V3.5H10.5" fill="none" stroke="#959595"/><path d="M4 4.5Q3 4.5 3 5.5V7.5Q3 8.5 2.3 8.5Q3 8.5 3 9.5V11.5Q3 12 4 12" fill="none" stroke="#c4c43a" stroke-width="0.9"/><path d="M7 4.5Q8 4.5 8 5.5V7.5Q8 8.5 8.7 8.5Q8 8.5 8 9.5V11.5Q8 12 7 12" fill="none" stroke="#c4c43a" stroke-width="0.9"/></svg>
<span style="top:359.34px;font-size:12px;line-height:15.0px;color:#000;letter-spacing:-0.32px;left:381.2px;">0005_Brief1-Scan.json</span>
<span style="top:359.34px;font-size:12px;line-height:15.0px;color:#000;letter-spacing:-0.6px;right:445px;">4 KB</span>
<span style="top:359.34px;font-size:12px;line-height:15.0px;color:#000;letter-spacing:-0.6px;left:678.6px;">18.02.2025 15:10:36</span>
<span style="top:359.34px;font-size:12px;line-height:15.0px;color:#000;letter-spacing:-0.4px;left:907.3px;">T-INPUTMANAGEMENTK</span>
<span style="top:359.34px;font-size:12px;line-height:15.0px;color:#000;letter-spacing:-0.2px;left:1070px;width:18px;overflow:hidden;">JSC</span>
<svg style="left:364px;top:377px;" width="14" height="16" viewBox="0 0 14 16"><path d="M1.5 0.5H9.5L13.5 4.5V14.5H1.5Z" fill="#f6f6f6" stroke="#dcdcdc"/><path d="M9.5 0.5V4.5H13.5" fill="none" stroke="#dcdcdc"/><path d="M7 9.5L10.72 7.35A4.3 4.3 0 0 0 3.28 7.35Z" fill="#db4437"/><path d="M7 9.5L7 13.8A4.3 4.3 0 0 0 10.72 7.35Z" fill="#f4c20d"/><path d="M7 9.5L3.28 7.35A4.3 4.3 0 0 0 7 13.8Z" fill="#0f9d58"/><circle cx="7" cy="9.5" r="2.1" fill="#fff"/><circle cx="7" cy="9.5" r="1.6" fill="#4285f4"/></svg>
<span style="top:378.34px;font-size:12px;line-height:15.0px;color:#000;letter-spacing:-0.32px;left:381.2px;">0005_Brief1-Scan.pdf</span>
<span style="top:378.34px;font-size:12px;line-height:15.0px;color:#000;letter-spacing:-0.6px;right:445px;">1.122 KB</span>
<span style="top:378.34px;font-size:12px;line-height:15.0px;color:#000;letter-spacing:-0.6px;left:678.6px;">18.02.2025 15:10:36</span>
<span style="top:378.34px;font-size:12px;line-height:15.0px;color:#000;letter-spacing:-0.4px;left:907.3px;">T-INPUTMANAGEMENTK</span>
<span style="top:378.34px;font-size:12px;line-height:15.0px;color:#000;letter-spacing:-0.2px;left:1070px;width:18px;overflow:hidden;">Chr</span>
<svg style="left:365px;top:396px;" width="11" height="14" viewBox="0 0 11 14"><path d="M0.5 0.5H7.5L10.5 3.5V13.5H0.5Z" fill="#fff" stroke="#959595"/><path d="M7.5 0.5V3.5H10.5" fill="none" stroke="#959595"/><path d="M4 4.5Q3 4.5 3 5.5V7.5Q3 8.5 2.3 8.5Q3 8.5 3 9.5V11.5Q3 12 4 12" fill="none" stroke="#c4c43a" stroke-width="0.9"/><path d="M7 4.5Q8 4.5 8 5.5V7.5Q8 8.5 8.7 8.5Q8 8.5 8 9.5V11.5Q8 12 7 12" fill="none" stroke="#c4c43a" stroke-width="0.9"/></svg>
<span style="top:397.34px;font-size:12px;line-height:15.0px;color:#000;letter-spacing:-0.32px;left:381.2px;">0006_Brief5-Scan.json</span>
<span style="top:397.34px;font-size:12px;line-height:15.0px;color:#000;letter-spacing:-0.6px;right:445px;">4 KB</span>
<span style="top:397.34px;font-size:12px;line-height:15.0px;color:#000;letter-spacing:-0.6px;left:678.6px;">18.02.2025 15:10:37</span>
<span style="top:397.34px;font-size:12px;line-height:15.0px;color:#000;letter-spacing:-0.4px;left:907.3px;">T-INPUTMANAGEMENTK</span>
<span style="top:397.34px;font-size:12px;line-height:15.0px;color:#000;letter-spacing:-0.2px;left:1070px;width:18px;overflow:hidden;">JSC</span>
<svg style="left:364px;top:415px;" width="14" height="16" viewBox="0 0 14 16"><path d="M1.5 0.5H9.5L13.5 4.5V14.5H1.5Z" fill="#f6f6f6" stroke="#dcdcdc"/><path d="M9.5 0.5V4.5H13.5" fill="none" stroke="#dcdcdc"/><path d="M7 9.5L10.72 7.35A4.3 4.3 0 0 0 3.28 7.35Z" fill="#db4437"/><path d="M7 9.5L7 13.8A4.3 4.3 0 0 0 10.72 7.35Z" fill="#f4c20d"/><path d="M7 9.5L3.28 7.35A4.3 4.3 0 0 0 7 13.8Z" fill="#0f9d58"/><circle cx="7" cy="9.5" r="2.1" fill="#fff"/><circle cx="7" cy="9.5" r="1.6" fill="#4285f4"/></svg>
<span style="top:416.34px;font-size:12px;line-height:15.0px;color:#000;letter-spacing:-0.32px;left:381.2px;">0006_Brief5-Scan.pdf</span>
<span style="top:416.34px;font-size:12px;line-height:15.0px;color:#000;letter-spacing:-0.6px;right:445px;">1.158 KB</span>
<span style="top:416.34px;font-size:12px;line-height:15.0px;color:#000;letter-spacing:-0.6px;left:678.6px;">18.02.2025 15:10:37</span>
<span style="top:416.34px;font-size:12px;line-height:15.0px;color:#000;letter-spacing:-0.4px;left:907.3px;">T-INPUTMANAGEMENTK</span>
<span style="top:416.34px;font-size:12px;line-height:15.0px;color:#000;letter-spacing:-0.2px;left:1070px;width:18px;overflow:hidden;">Chr</span>
<svg style="left:365px;top:434px;" width="11" height="14" viewBox="0 0 11 14"><path d="M0.5 0.5H7.5L10.5 3.5V13.5H0.5Z" fill="#fff" stroke="#959595"/><path d="M7.5 0.5V3.5H10.5" fill="none" stroke="#959595"/><path d="M4 4.5Q3 4.5 3 5.5V7.5Q3 8.5 2.3 8.5Q3 8.5 3 9.5V11.5Q3 12 4 12" fill="none" stroke="#c4c43a" stroke-width="0.9"/><path d="M7 4.5Q8 4.5 8 5.5V7.5Q8 8.5 8.7 8.5Q8 8.5 8 9.5V11.5Q8 12 7 12" fill="none" stroke="#c4c43a" stroke-width="0.9"/></svg>
<span style="top:435.34px;font-size:12px;line-height:15.0px;color:#000;letter-spacing:-0.32px;left:381.2px;">0007_Brief1-Scan.json</span>
<span style="top:435.34px;font-size:12px;line-height:15.0px;color:#000;letter-spacing:-0.6px;right:445px;">4 KB</span>
<span style="top:435.34px;font-size:12px;line-height:15.0px;color:#000;letter-spacing:-0.6px;left:678.6px;">18.02.2025 15:10:37</span>
<span style="top:435.34px;font-size:12px;line-height:15.0px;color:#000;letter-spacing:-0.4px;left:907.3px;">T-INPUTMANAGEMENTK</span>
<span style="top:435.34px;font-size:12px;line-height:15.0px;color:#000;letter-spacing:-0.2px;left:1070px;width:18px;overflow:hidden;">JSC</span>
<svg style="left:364px;top:453px;" width="14" height="16" viewBox="0 0 14 16"><path d="M1.5 0.5H9.5L13.5 4.5V14.5H1.5Z" fill="#f6f6f6" stroke="#dcdcdc"/><path d="M9.5 0.5V4.5H13.5" fill="none" stroke="#dcdcdc"/><path d="M7 9.5L10.72 7.35A4.3 4.3 0 0 0 3.28 7.35Z" fill="#db4437"/><path d="M7 9.5L7 13.8A4.3 4.3 0 0 0 10.72 7.35Z" fill="#f4c20d"/><path d="M7 9.5L3.28 7.35A4.3 4.3 0 0 0 7 13.8Z" fill="#0f9d58"/><circle cx="7" cy="9.5" r="2.1" fill="#fff"/><circle cx="7" cy="9.5" r="1.6" fill="#4285f4"/></svg>
<span style="top:454.34px;font-size:12px;line-height:15.0px;color:#000;letter-spacing:-0.32px;left:381.2px;">0007_Brief1-Scan.pdf</span>
<span style="top:454.34px;font-size:12px;line-height:15.0px;color:#000;letter-spacing:-0.6px;right:445px;">1.122 KB</span>
<span style="top:454.34px;font-size:12px;line-height:15.0px;color:#000;letter-spacing:-0.6px;left:678.6px;">18.02.2025 15:10:37</span>
<span style="top:454.34px;font-size:12px;line-height:15.0px;color:#000;letter-spacing:-0.4px;left:907.3px;">T-INPUTMANAGEMENTK</span>
<span style="top:454.34px;font-size:12px;line-height:15.0px;color:#000;letter-spacing:-0.2px;left:1070px;width:18px;overflow:hidden;">Chr</span>
<svg style="left:365px;top:472px;" width="11" height="14" viewBox="0 0 11 14"><path d="M0.5 0.5H7.5L10.5 3.5V13.5H0.5Z" fill="#fff" stroke="#959595"/><path d="M7.5 0.5V3.5H10.5" fill="none" stroke="#959595"/><path d="M4 4.5Q3 4.5 3 5.5V7.5Q3 8.5 2.3 8.5Q3 8.5 3 9.5V11.5Q3 12 4 12" fill="none" stroke="#c4c43a" stroke-width="0.9"/><path d="M7 4.5Q8 4.5 8 5.5V7.5Q8 8.5 8.7 8.5Q8 8.5 8 9.5V11.5Q8 12 7 12" fill="none" stroke="#c4c43a" stroke-width="0.9"/></svg>
<span style="top:473.34px;font-size:12px;line-height:15.0px;color:#000;letter-spacing:-0.32px;left:381.2px;">0008_Brief5-Scan.json</span>
<span style="top:473.34px;font-size:12px;line-height:15.0px;color:#000;letter-spacing:-0.6px;right:445px;">4 KB</span>
<span style="top:473.34px;font-size:12px;line-height:15.0px;color:#000;letter-spacing:-0.6px;left:678.6px;">18.02.2025 15:10:38</span>
<span style="top:473.34px;font-size:12px;line-height:15.0px;color:#000;letter-spacing:-0.4px;left:907.3px;">T-INPUTMANAGEMENTK</span>
<span style="top:473.34px;font-size:12px;line-height:15.0px;color:#000;letter-spacing:-0.2px;left:1070px;width:18px;overflow:hidden;">JSC</span>
<svg style="left:364px;top:491px;" width="14" height="16" viewBox="0 0 14 16"><path d="M1.5 0.5H9.5L13.5 4.5V14.5H1.5Z" fill="#f6f6f6" stroke="#dcdcdc"/><path d="M9.5 0.5V4.5H13.5" fill="none" stroke="#dcdcdc"/><path d="M7 9.5L10.72 7.35A4.3 4.3 0 0 0 3.28 7.35Z" fill="#db4437"/><path d="M7 9.5L7 13.8A4.3 4.3 0 0 0 10.72 7.35Z" fill="#f4c20d"/><path d="M7 9.5L3.28 7.35A4.3 4.3 0 0 0 7 13.8Z" fill="#0f9d58"/><circle cx="7" cy="9.5" r="2.1" fill="#fff"/><circle cx="7" cy="9.5" r="1.6" fill="#4285f4"/></svg>
<span style="top:492.34px;font-size:12px;line-height:15.0px;color:#000;letter-spacing:-0.32px;left:381.2px;">0008_Brief5-Scan.pdf</span>
<span style="top:492.34px;font-size:12px;line-height:15.0px;color:#000;letter-spacing:-0.6px;right:445px;">1.158 KB</span>
<span style="top:492.34px;font-size:12px;line-height:15.0px;color:#000;letter-spacing:-0.6px;left:678.6px;">18.02.2025 15:10:38</span>
<span style="top:492.34px;font-size:12px;line-height:15.0px;color:#000;letter-spacing:-0.4px;left:907.3px;">T-INPUTMANAGEMENTK</span>
<span style="top:492.34px;font-size:12px;line-height:15.0px;color:#000;letter-spacing:-0.2px;left:1070px;width:18px;overflow:hidden;">Chr</span>
<svg style="left:365px;top:510px;" width="11" height="14" viewBox="0 0 11 14"><path d="M0.5 0.5H7.5L10.5 3.5V13.5H0.5Z" fill="#fff" stroke="#959595"/><path d="M7.5 0.5V3.5H10.5" fill="none" stroke="#959595"/><path d="M4 4.5Q3 4.5 3 5.5V7.5Q3 8.5 2.3 8.5Q3 8.5 3 9.5V11.5Q3 12 4 12" fill="none" stroke="#c4c43a" stroke-width="0.9"/><path d="M7 4.5Q8 4.5 8 5.5V7.5Q8 8.5 8.7 8.5Q8 8.5 8 9.5V11.5Q8 12 7 12" fill="none" stroke="#c4c43a" stroke-width="0.9"/></svg>
<div style="left:1088px;top:179px;width:17px;height:333px;background:#f0f0f0"></div>
<svg style="left:1091px;top:185px;" width="9" height="7" viewBox="0 0 9 7"><path d="M0.8 5.5L4.5 1.5L8.2 5.5" stroke="#505050" stroke-width="2" fill="none"/></svg>
<div style="left:1088px;top:197px;width:15px;height:17px;background:#cdcdcd"></div>
<svg style="left:1091px;top:499px;" width="9" height="7" viewBox="0 0 9 7"><path d="M0.8 1.5L4.5 5.5L8.2 1.5" stroke="#505050" stroke-width="2" fill="none"/></svg>
<div style="left:358px;top:512px;width:747px;height:16px;background:#f0f0f0"></div>
<div style="left:376px;top:512px;width:444px;height:15px;background:#cdcdcd"></div>
<svg style="left:363px;top:515px;" width="8" height="9" viewBox="0 0 8 9"><path d="M6 0.8L2 4.5L6 8.2" stroke="#505050" stroke-width="2" fill="none"/></svg>
<svg style="left:1074px;top:515px;" width="8" height="9" viewBox="0 0 8 9"><path d="M2 0.8L6 4.5L2 8.2" stroke="#505050" stroke-width="2" fill="none"/></svg>
<span style="top:535.34px;font-size:12px;line-height:15.0px;color:#000;letter-spacing:-0.3px;left:10.8px;">0 B of 0 B in 0 of 8</span>
<span style="top:535.34px;font-size:12px;line-height:15.0px;color:#000;letter-spacing:-0.2px;right:761px;">12 hidden</span>
<span style="top:535.34px;font-size:12px;line-height:15.0px;color:#000;letter-spacing:-0.37px;left:360px;">0 B of 9,71 GB in 0 of 18.000</span>
<div style="left:8px;top:551px;width:1098px;height:1px;background:#a8a8a8"></div>
<div style="left:8px;top:552px;width:1098px;height:1px;background:#ffffff"></div>
<div style="left:8px;top:555px;width:1098px;height:21px;background:#bfcddb"></div>
<span style="top:559.34px;font-size:12px;line-height:15.0px;color:#000;left:13.5px;">Queue</span>
<div style="left:10px;top:578px;width:23px;height:22px;background:#dde8f4;border:1px solid #0078d7"></div>
<svg style="left:13px;top:580px;" width="17" height="17" viewBox="0 0 17 17"><path d="M6.5 0.5H12L14.5 3V9.5H6.5Z" fill="#fff" stroke="#8a8a8a"/><path d="M3.5 3.5H9L11.5 6V12.5H3.5Z" fill="#fff" stroke="#8a8a8a"/><path d="M0.5 6.5H6L8.5 9V15.5H0.5Z" fill="#fff" stroke="#8a8a8a"/><path d="M2 10.5H6M2 12.5H6M2 14.5H5" stroke="#8a8a8a"/><path d="M8 4H11M11 7H13" stroke="#8a8a8a" stroke-width="0.8"/><path d="M8 7V16.5L16.5 11.75Z" fill="#3cbc3c"/></svg>
<div style="left:36px;top:579px;width:1px;height:21px;background:#c8c8c8"></div>
<svg style="left:46px;top:584px;" width="10" height="12" viewBox="0 0 10 12"><path d="M0 0V12L10 6Z" fill="#c8c8c8"/></svg>
<svg style="left:67px;top:584px;" width="13" height="12" viewBox="0 0 13 12"><path d="M1 0.5L12 11.5M12 0.5L1 11.5" stroke="#c4c4c4" stroke-width="2"/></svg>
<div style="left:88px;top:579px;width:1px;height:21px;background:#c8c8c8"></div>
<svg style="left:97px;top:582px;" width="10" height="14" viewBox="0 0 10 14"><path d="M5 0L0 5H3.5V14H6.5V5H10Z" fill="#c8c8c8"/></svg>
<svg style="left:120px;top:582px;" width="10" height="14" viewBox="0 0 10 14"><path d="M5 14L0 9H3.5V0H6.5V9H10Z" fill="#c8c8c8"/></svg>
<div style="left:140px;top:579px;width:1px;height:21px;background:#c8c8c8"></div>
<svg style="left:146px;top:581px;" width="17" height="17" viewBox="0 0 17 17"><path d="M6.5 0.5H12L14.5 3V9.5H6.5Z" fill="#f4f4f4" stroke="#c4c4c4"/><path d="M3.5 3.5H9L11.5 6V12.5H3.5Z" fill="#f4f4f4" stroke="#c4c4c4"/><path d="M0.5 6.5H6L8.5 9V15.5H0.5Z" fill="#f4f4f4" stroke="#c4c4c4"/><path d="M2 10.5H6M2 12.5H6M2 14.5H5" stroke="#c4c4c4"/><path d="M8 4H11M11 7H13" stroke="#c4c4c4" stroke-width="0.8"/><circle cx="12" cy="12" r="4" fill="#f4f4f4" stroke="#c4c4c4" stroke-width="1.3"/><path d="M12 10V12.5H13.5" stroke="#c4c4c4" fill="none"/></svg>
<svg style="left:169px;top:588px;" width="5" height="3" viewBox="0 0 5 3"><path d="M0 0H5L2.5 3Z" fill="#b8b8b8"/></svg>
<svg style="left:181px;top:580px;" width="17" height="17" viewBox="0 0 17 17"><defs><radialGradient id="gg" cx="0.4" cy="0.35" r="0.7"><stop offset="0" stop-color="#fde9a0"/><stop offset="1" stop-color="#f2b020"/></radialGradient></defs><rect x="6.6" y="0.3" width="3.8" height="4" rx="0.8" fill="#f7c030" transform="rotate(0 8.5 8.5)"/><rect x="6.6" y="0.3" width="3.8" height="4" rx="0.8" fill="#f7c030" transform="rotate(45 8.5 8.5)"/><rect x="6.6" y="0.3" width="3.8" height="4" rx="0.8" fill="#f7c030" transform="rotate(90 8.5 8.5)"/><rect x="6.6" y="0.3" width="3.8" height="4" rx="0.8" fill="#f7c030" transform="rotate(135 8.5 8.5)"/><rect x="6.6" y="0.3" width="3.8" height="4" rx="0.8" fill="#f7c030" transform="rotate(180 8.5 8.5)"/><rect x="6.6" y="0.3" width="3.8" height="4" rx="0.8" fill="#f7c030" transform="rotate(225 8.5 8.5)"/><rect x="6.6" y="0.3" width="3.8" height="4" rx="0.8" fill="#f7c030" transform="rotate(270 8.5 8.5)"/><rect x="6.6" y="0.3" width="3.8" height="4" rx="0.8" fill="#f7c030" transform="rotate(315 8.5 8.5)"/><circle cx="8.5" cy="8.5" r="6" fill="url(#gg)" stroke="#eaa418" stroke-width="0.6"/><circle cx="8.5" cy="8.5" r="3" fill="#f2f2f2" stroke="#e0a020" stroke-width="0.6"/></svg>
<div style="left:8px;top:602px;width:1098px;height:93px;background:#fff;border:1px solid #828790"></div>
<div style="left:79px;top:604px;width:1px;height:24px;background:#e5e5e5"></div>
<div style="left:329px;top:604px;width:1px;height:24px;background:#e5e5e5"></div>
<div style="left:579px;top:604px;width:1px;height:24px;background:#e5e5e5"></div>
<div style="left:659px;top:604px;width:1px;height:24px;background:#e5e5e5"></div>
<div style="left:739px;top:604px;width:1px;height:24px;background:#e5e5e5"></div>
<div style="left:819px;top:604px;width:1px;height:24px;background:#e5e5e5"></div>
<div style="left:919px;top:604px;width:1px;height:24px;background:#e5e5e5"></div>
<span style="top:609.34px;font-size:12px;line-height:15.0px;color:#000;letter-spacing:-0.2px;left:16.6px;">Operation</span>
<span style="top:609.34px;font-size:12px;line-height:15.0px;color:#000;letter-spacing:-0.1px;left:86px;">Source</span>
<span style="top:609.34px;font-size:12px;line-height:15.0px;color:#000;letter-spacing:-0.2px;left:336px;">Destination</span>
<span style="top:609.34px;font-size:12px;line-height:15.0px;color:#000;letter-spacing:-0.3px;right:455px;">Transferred</span>
<span style="top:609.34px;font-size:12px;line-height:15.0px;color:#000;right:374.5px;">Time</span>
<span style="top:609.34px;font-size:12px;line-height:15.0px;color:#000;right:295px;">Speed</span>
<span style="top:609.34px;font-size:12px;line-height:15.0px;color:#000;letter-spacing:-0.1px;left:846.8px;">Progress</span>
<div style="left:8px;top:696px;width:1098px;height:1px;background:#fafafa"></div>
<div style="left:8px;top:698px;width:937px;height:19px;border:1px solid #e0e0e0;border-bottom:none"></div>
<div style="left:947px;top:698px;width:42px;height:19px;border:1px solid #e0e0e0;border-bottom:none"></div>
<div style="left:991px;top:698px;width:33px;height:19px;border:1px solid #e0e0e0;border-bottom:none"></div>
<div style="left:1026px;top:698px;width:80px;height:19px;border:1px solid #e0e0e0;border-bottom:none"></div>
<span style="top:700.34px;font-size:12px;line-height:15.0px;color:#000;letter-spacing:-0.3px;left:961px;">S3</span>
<svg style="left:1001px;top:699px;" width="12" height="16" viewBox="0 0 12 16"><path d="M2.5 7V4.5A3.5 3.5 0 0 1 9.5 4.5V7" fill="none" stroke="#e8a800" stroke-width="1.8"/><rect x="0" y="7" width="12" height="9" rx="1" fill="#f8c020"/><rect x="5" y="10" width="2" height="3" fill="#333"/></svg>
<span style="top:700.34px;font-size:12px;line-height:15.0px;color:#000;letter-spacing:-0.3px;left:1046.5px;">0:31:02</span>
<div style="left:1102px;top:707px;width:2px;height:2px;background:#b0b0b0"></div>
<div style="left:1099.0px;top:710.0px;width:2px;height:2px;background:#b0b0b0"></div>
<div style="left:1102px;top:710.0px;width:2px;height:2px;background:#b0b0b0"></div>
<div style="left:1096px;top:713px;width:2px;height:2px;background:#b0b0b0"></div>
<div style="left:1099.0px;top:713px;width:2px;height:2px;background:#b0b0b0"></div>
<div style="left:1102px;top:713px;width:2px;height:2px;background:#b0b0b0"></div>
<div style="left:229px;top:148px;width:499px;height:229px;background:#fff;border:1px solid #777;box-shadow:0 3px 14px rgba(0,0,0,0.28)"></div>
<span style="top:154.34px;font-size:12px;line-height:15.0px;color:#000;left:233.2px;">Error</span>
<svg style="left:656px;top:156px;" width="7" height="10" viewBox="0 0 7 10"><path d="M1 2.6Q1.2 0.8 3.4 0.8Q5.8 0.8 5.8 2.8Q5.8 4.2 4.2 5.1Q3.2 5.7 3.2 7.2" fill="none" stroke="#000" stroke-width="1.2"/><rect x="2.5" y="8.4" width="1.5" height="1.5" fill="#000"/></svg>
<svg style="left:699px;top:156px;" width="10" height="10" viewBox="0 0 10 10"><path d="M0.3 0.3L9.7 9.7M9.7 0.3L0.3 9.7" stroke="#000" stroke-width="1"/></svg>
<svg style="left:242px;top:189px;" width="32" height="32" viewBox="0 0 32 32"><defs><linearGradient id="eg" x1="0" y1="0" x2="1" y2="1"><stop offset="0" stop-color="#f0682a"/><stop offset="1" stop-color="#d03c0c"/></linearGradient></defs><circle cx="16" cy="16" r="15.2" fill="url(#eg)"/><path d="M9.3 9.3L22.7 22.7M22.7 9.3L9.3 22.7" stroke="#fff" stroke-width="2.7" stroke-linecap="round"/></svg>
<span style="top:190.34px;font-size:12px;line-height:15.0px;color:#000;left:288.3px;">Error listing directory</span>
<span style="top:205.34px;font-size:12px;line-height:15.0px;color:#000;letter-spacing:0.02px;left:288.3px;">&#x27;/int-inputmanagementk-swimrit/SWIM/_finished/inProcess/20250218_001&#x27;.</span>
<div style="left:288px;top:236px;width:427px;height:84px;background:#fff;border:1px solid #7a7a7a"></div>
<div style="left:697px;top:238px;width:16px;height:80px;background:#f0f0f0"></div>
<svg style="left:700px;top:242px;" width="10" height="6" viewBox="0 0 10 6"><path d="M0.5 5L5 1L9.5 5" stroke="#c0c0c0" stroke-width="1.4" fill="none"/></svg>
<svg style="left:700px;top:306px;" width="10" height="6" viewBox="0 0 10 6"><path d="M0.5 1L5 5L9.5 1" stroke="#c0c0c0" stroke-width="1.4" fill="none"/></svg>
<span style="top:240.34px;font-size:12px;line-height:15.0px;color:#000;letter-spacing:-0.05px;left:294.4px;">File or folder &#x27;/int-inputmanagementk-</span>
<span style="top:255.34px;font-size:12px;line-height:15.0px;color:#000;letter-spacing:-0.13px;left:294.4px;">swimrit/SWIM/_finished/inProcess/20250218_001&#x27; does not exist.</span>
<div style="left:230px;top:335px;width:497px;height:41px;background:#f0f0f0"></div>
<div style="left:560px;top:344px;width:73px;height:23px;background:#e1e1e1;border:2px solid #0078d7"></div>
<span style="top:349.34px;font-size:12px;line-height:15.0px;color:#000;left:396.5px;width:400px;text-align:center;">OK</span>
<div style="left:641px;top:344px;width:73px;height:23px;background:#e1e1e1;border:1px solid #adadad"></div>
<span style="top:349.34px;font-size:12px;line-height:15.0px;color:#000;left:477.5px;width:400px;text-align:center;">Help</span>
<div style="left:666px;top:362px;width:9px;height:1px;background:#000"></div></body></html>
